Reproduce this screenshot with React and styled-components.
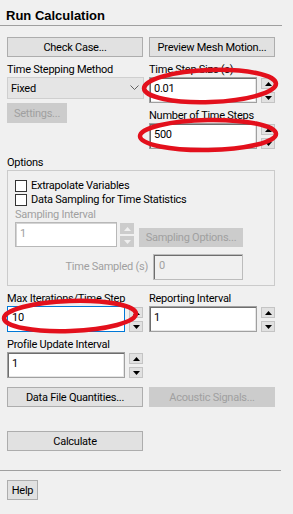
import React from "react";
import styled, { createGlobalStyle, css } from "styled-components";

const Global = createGlobalStyle`
  html, body { margin: 0; padding: 0; background: #f0f0f0; }
  body { font-family: Roboto, "Noto Sans", "Liberation Sans", sans-serif; font-size: 11px; letter-spacing: -0.25px; color: #000; }
`;

const Page = styled.div`
  position: relative;
  width: 293px;
  height: 514px;
  background: #f0f0f0;
  overflow: hidden;
`;

const Header = styled.div`
  width: 282px;
  height: 26px;
  padding: 8px 0 0 6px;
  box-sizing: border-box;
  border-bottom: 1px solid #a0a0a0;
`;

const Title = styled.div`
  font-family: "Liberation Sans", Arial, sans-serif;
  font-weight: bold;
  font-size: 13px;
  letter-spacing: 0;
  line-height: 16px;
  color: #000;
`;

const Body = styled.div`
  padding: 11px 0 0 7px;
  width: 268px;
`;

const TwoCol = styled.div`
  display: grid;
  grid-template-columns: 136px 126px;
  column-gap: 6px;
  align-items: start;
  margin-top: ${(p) => p.$mt || 0}px;
`;

const Col = styled.div`
  display: flex;
  flex-direction: column;
  align-items: flex-start;
`;

const Label = styled.div`
  line-height: 14px;
  height: 14px;
  white-space: nowrap;
  color: ${(p) => (p.$disabled ? "#a0a0a0" : "#000")};
  margin-top: ${(p) => p.$mt || 0}px;
`;

const Button = styled.div`
  box-sizing: border-box;
  height: ${(p) => p.$h || 20}px;
  width: ${(p) => (p.$w ? `${p.$w}px` : "100%")};
  display: flex;
  align-items: center;
  justify-content: center;
  white-space: nowrap;
  margin-top: ${(p) => p.$mt || 0}px;
  margin-left: ${(p) => p.$ml || 0}px;
  ${(p) =>
    p.$disabled
      ? css`
          background: #cccccc;
          border: 1px solid #cccccc;
          color: #a0a0a0;
        `
      : css`
          background: #e1e1e1;
          border: 1px solid #adadad;
          color: #000;
        `}
`;

const Select = styled.div`
  box-sizing: border-box;
  width: 137px;
  height: 22px;
  background: #e5e5e5;
  border: 1px solid #cfcfcf;
  display: flex;
  align-items: center;
  justify-content: space-between;
  padding: 0 4px 0 3px;
`;

const Spin = styled.div`
  display: flex;
  align-items: stretch;
  gap: ${(p) => p.$gap || 4}px;
  width: ${(p) => (p.$w ? `${p.$w}px` : "100%")};
  height: ${(p) => p.$h || 26}px;
`;

const Input = styled.div`
  box-sizing: border-box;
  flex: 1;
  height: 100%;
  background: #fff;
  color: ${(p) => (p.$disabled ? "#a0a0a0" : "#000")};
  padding: 4px 0 0 4px;
  line-height: 14px;
  ${(p) =>
    p.$focus
      ? css`
          border: 1px solid #0078d7;
        `
      : p.$disabled
      ? css`
          border: 1px solid #b8b8b8;
          box-shadow: inset 1px 1px 0 #d4d4d4;
        `
      : css`
          border: 1px solid #a0a0a0;
          box-shadow: inset 1px 1px 0 #6e6e6e, inset -1px -1px 0 #e6e6e6;
        `}
`;

const Arrows = styled.div`
  flex: 0 0 14px;
  display: flex;
  flex-direction: column;
  justify-content: space-between;
  padding: 1px 0 0;
`;

const ArrowBtn = styled.div`
  box-sizing: border-box;
  height: 11px;
  width: 14px;
  display: flex;
  align-items: center;
  justify-content: center;
  background: ${(p) => (p.$disabled ? "#cccccc" : "#e1e1e1")};
  border: 1px solid ${(p) => (p.$disabled ? "#cccccc" : "#c4c4c4")};
`;

const Tri = ({ down, color }) => (
  <svg width="7" height="4" viewBox="0 0 7 4">
    <polygon points={down ? "0,0 7,0 3.5,4" : "0,4 7,4 3.5,0"} fill={color} />
  </svg>
);

const SpinField = ({ value, h, w, gap, focus, disabled }) => (
  <Spin $h={h} $w={w} $gap={gap}>
    <Input $focus={focus} $disabled={disabled}>
      {value}
    </Input>
    <Arrows>
      <ArrowBtn $disabled={disabled}>
        <Tri color={disabled ? "#f0f0f0" : "#000"} />
      </ArrowBtn>
      <ArrowBtn $disabled={disabled}>
        <Tri down color={disabled ? "#f0f0f0" : "#000"} />
      </ArrowBtn>
    </Arrows>
  </Spin>
);

const Group = styled.div`
  box-sizing: border-box;
  width: 268px;
  border: 1px solid #cbcbcb;
  padding: 8px 0 5px 7px;
`;

const CheckRow = styled.div`
  display: flex;
  align-items: center;
  gap: 4px;
  height: 14px;
  line-height: 14px;
  white-space: nowrap;
`;

const Box = styled.div`
  box-sizing: border-box;
  flex: 0 0 12px;
  width: 12px;
  height: 12px;
  background: #fff;
  border: 1px solid #333;
`;

const SamplingRow = styled.div`
  display: flex;
  align-items: flex-end;
  width: 228px;
  height: 25px;
`;

const TimeRow = styled.div`
  display: flex;
  justify-content: flex-end;
  align-items: center;
  gap: 5px;
  width: 228px;
  height: 26px;
  margin-top: 7px;
`;

const ReadOnly = styled.div`
  box-sizing: border-box;
  width: 90px;
  height: 26px;
  background: #f0f0f0;
  color: #a0a0a0;
  border: 1px solid #bcbcbc;
  box-shadow: inset 1px 1px 0 #6e6e6e;
  padding: 4px 0 0 5px;
  line-height: 14px;
`;

const Footer = styled.div`
  width: 281px;
  border-top: 1px solid #a0a0a0;
  margin-top: 19px;
  padding: 9px 0 0 7px;
  box-sizing: border-box;
`;

const Overlay = styled.svg`
  position: absolute;
  left: 0;
  top: 0;
  pointer-events: none;
`;

const Chevron = () => (
  <svg width="9" height="6" viewBox="0 0 9 6">
    <polyline points="0.5,0.5 4.5,4.5 8.5,0.5" fill="none" stroke="#606060" strokeWidth="1" />
  </svg>
);

export default function App() {
  return (
    <>
      <Global />
      <Page>
        <Header>
          <Title>Run Calculation</Title>
        </Header>
        <Body>
          <TwoCol>
            <Button>Check Case...</Button>
            <Button>Preview Mesh Motion...</Button>
          </TwoCol>

          <TwoCol $mt={6}>
            <Col>
              <Label>Time Stepping Method</Label>
              <Select>
                <span>Fixed</span>
                <Chevron />
              </Select>
              <Button $w={60} $disabled $mt={4}>
                Settings...
              </Button>
            </Col>
            <Col>
              <Label>Time Step Size (s)</Label>
              <SpinField value="0.01" />
              <Label $mt={6}>Number of Time Steps</Label>
              <SpinField value="500" />
            </Col>
          </TwoCol>

          <Label $mt={7}>Options</Label>
          <Group>
            <CheckRow>
              <Box />
              Extrapolate Variables
            </CheckRow>
            <CheckRow>
              <Box />
              Data Sampling for Time Statistics
            </CheckRow>
            <Label $disabled $mt={1}>
              Sampling Interval
            </Label>
            <SamplingRow>
              <SpinField value="1" disabled h={25} w={119} gap={3} />
              <Button $w={104} $h={19} $ml={5} $disabled>
                Sampling Options...
              </Button>
            </SamplingRow>
            <TimeRow>
              <Label $disabled>Time Sampled (s)</Label>
              <ReadOnly>0</ReadOnly>
            </TimeRow>
          </Group>

          <TwoCol $mt={6}>
            <Col>
              <Label>Max Iterations/Time Step</Label>
              <SpinField value="10" focus />
            </Col>
            <Col>
              <Label>Reporting Interval</Label>
              <SpinField value="1" />
            </Col>
          </TwoCol>

          <TwoCol $mt={6}>
            <Col>
              <Label>Profile Update Interval</Label>
              <SpinField value="1" />
            </Col>
          </TwoCol>

          <TwoCol $mt={9}>
            <Button>Data File Quantities...</Button>
            <Button $disabled>Acoustic Signals...</Button>
          </TwoCol>

          <TwoCol $mt={24}>
            <Button>Calculate</Button>
          </TwoCol>
        </Body>
        <Footer>
          <Button $w={31}>Help</Button>
        </Footer>

        <Overlay width="293" height="514" viewBox="0 0 293 514">
          <g fill="none" stroke="#e3101c" strokeWidth="4.5">
            <ellipse cx="210" cy="86" rx="66" ry="16" transform="rotate(-2 210 86)" />
            <ellipse cx="208" cy="135" rx="68" ry="15" transform="rotate(-1 208 135)" />
            <ellipse cx="70" cy="316" rx="66" ry="15" transform="rotate(-2 70 316)" />
          </g>
        </Overlay>
      </Page>
    </>
  );
}
